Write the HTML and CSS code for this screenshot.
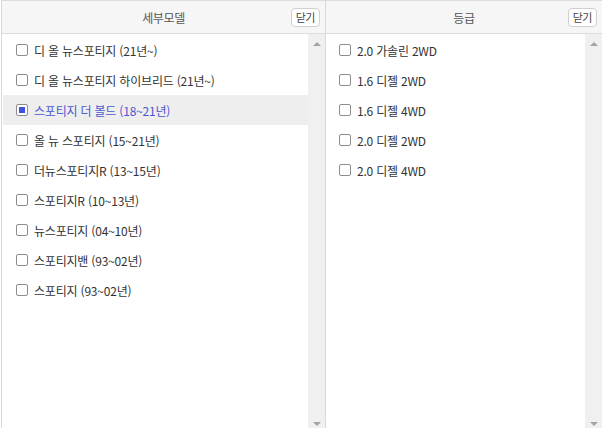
FILE: index.html
```html
<!DOCTYPE html>
<html lang="ko">
<head>
  <meta charset="UTF-8" />
  <title>모델 선택</title>
  <link rel="stylesheet" href="styles.css">
</head>
<body>
  <div class="picker">
    <div class="panel panel-model">
      <div class="panel-head">
        <span></span>
        <span class="title">세부모델</span>
        <button class="close-btn">닫기</button>
      </div>
      <div class="panel-body">
        <ul class="list">
          <li class="item"><span class="check"></span>디 올 뉴스포티지 (21년~)</li>
          <li class="item"><span class="check"></span>디 올 뉴스포티지 하이브리드 (21년~)</li>
          <li class="item selected"><span class="check"></span>스포티지 더 볼드 (18~21년)</li>
          <li class="item"><span class="check"></span>올 뉴 스포티지 (15~21년)</li>
          <li class="item"><span class="check"></span>더뉴스포티지R (13~15년)</li>
          <li class="item"><span class="check"></span>스포티지R (10~13년)</li>
          <li class="item"><span class="check"></span>뉴스포티지 (04~10년)</li>
          <li class="item"><span class="check"></span>스포티지밴 (93~02년)</li>
          <li class="item"><span class="check"></span>스포티지 (93~02년)</li>
        </ul>
        <div class="scrollbar">
          <span class="arrow up"></span>
          <span class="arrow down"></span>
        </div>
      </div>
    </div>

    <div class="panel panel-grade">
      <div class="panel-head">
        <span></span>
        <span class="title">등급</span>
        <button class="close-btn">닫기</button>
      </div>
      <div class="panel-body">
        <ul class="list">
          <li class="item"><span class="check"></span>2.0 가솔린 2WD</li>
          <li class="item"><span class="check"></span>1.6 디젤 2WD</li>
          <li class="item"><span class="check"></span>1.6 디젤 4WD</li>
          <li class="item"><span class="check"></span>2.0 디젤 2WD</li>
          <li class="item"><span class="check"></span>2.0 디젤 4WD</li>
        </ul>
        <div class="scrollbar">
          <span class="arrow up"></span>
          <span class="arrow down"></span>
        </div>
      </div>
    </div>
  </div>
</body>
</html>
```

FILE: styles.css
```css
html, body {
  margin: 0;
  padding: 0;
  height: 100%;
  background: #fff;
}
body {
  font-family: "Noto Sans CJK KR", "Noto Sans", sans-serif;
  font-size: 12px;
  color: #333;
}
.picker {
  display: flex;
  height: 100%;
  padding-left: 1px;
  box-sizing: border-box;
}
.panel {
  display: flex;
  flex-direction: column;
  border-left: 1px solid #d9d9d9;
}
.panel-model {
  width: 323px;
}
.panel-grade {
  flex: 1;
}

/* header */
.panel-head {
  height: 32px;
  display: grid;
  grid-template-columns: 1fr auto 1fr;
  align-items: center;
  background: #f6f6f6;
  border-top: 1px solid #dcdcdc;
  border-bottom: 1px solid #dcdcdc;
}
.title {
  color: #555;
  letter-spacing: -0.4px;
}
.close-btn {
  justify-self: end;
  margin-right: 5px;
  height: 19px;
  padding: 0 4px;
  font-family: inherit;
  font-size: 11px;
  line-height: 15px;
  color: #444;
  background: #fff;
  border: 1px solid #d0d0d0;
  border-radius: 4px;
  letter-spacing: -0.5px;
}

/* list */
.panel-body {
  flex: 1;
  display: flex;
  min-height: 0;
}
.list {
  flex: 1;
  list-style: none;
  margin: 0;
  padding: 0;
}
.panel-model .list {
  padding-left: 1px;
}
.item {
  height: 30px;
  display: flex;
  align-items: center;
  padding-left: 13px;
  letter-spacing: -0.2px;
  white-space: nowrap;
}
.item:first-child {
  margin-top: 1px;
}
.item.selected {
  background: #eeeeee;
  color: #4a57cf;
}
.check {
  width: 10px;
  height: 10px;
  margin-right: 6px;
  border: 1px solid #8d8d8d;
  border-radius: 2px;
  background: #fff;
  display: flex;
  align-items: center;
  justify-content: center;
  flex-shrink: 0;
}
.selected .check::after {
  content: "";
  width: 6px;
  height: 6px;
  background: #3f4fe0;
}

/* scrollbar */
.scrollbar {
  width: 17px;
  background: #f0f0f0;
  display: flex;
  flex-direction: column;
  justify-content: space-between;
  align-items: center;
  padding: 8px 0 2px;
  box-sizing: border-box;
}
.arrow {
  width: 0;
  height: 0;
  border-left: 4px solid transparent;
  border-right: 4px solid transparent;
}
.arrow.up {
  border-bottom: 4px solid #a3a3a3;
}
.arrow.down {
  border-top: 4px solid #a3a3a3;
}
```
